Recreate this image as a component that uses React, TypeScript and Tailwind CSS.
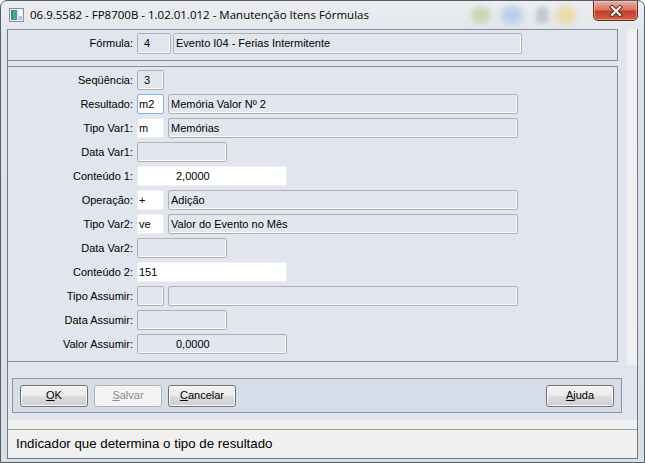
import React from "react";

type BoxProps = {
  w: string;
  kind: "gray" | "white" | "focus";
  text?: string;
  pad?: string;
};

function Box({ w, kind, text, pad }: BoxProps) {
  const base =
    kind === "gray"
      ? "border-[#b0b0b0] bg-[#e2e6ee] shadow-[inset_-1px_-1px_0_#fbfbfb]"
      : kind === "focus"
      ? "border-[#7eb4ea] bg-white"
      : "border-[#edf0f4] bg-white";
  return (
    <div
      className={`flex h-[20px] items-center overflow-hidden whitespace-nowrap rounded-[2px] border ${base} ${w} ${pad ?? "pl-[2px]"}`}
    >
      {text}
    </div>
  );
}

function Row({ label, children }: { label: string; children: React.ReactNode }) {
  return (
    <div className="flex h-[20px] items-center">
      <div className="w-[125px] text-right">{label}</div>
      <div className="ml-[4px] flex gap-[4px]">{children}</div>
    </div>
  );
}

function Btn({ children, disabled }: { children: React.ReactNode; disabled?: boolean }) {
  return (
    <div
      className={
        disabled
          ? "flex h-[22px] w-[68px] items-center justify-center rounded-[3px] border border-[#adb2b5] bg-[#f4f4f4] text-[#8a8a8a]"
          : "flex h-[22px] w-[68px] items-center justify-center rounded-[3px] border border-[#707070] bg-[linear-gradient(#f2f2f2,#ebebeb_50%,#dddddd_50%,#cfcfcf)] shadow-[inset_0_0_0_1px_#fcfcfc] text-black"
      }
    >
      {children}
    </div>
  );
}

export default function App() {
  return (
    <div className="flex h-[463px] w-[645px] flex-col overflow-hidden rounded-t-[7px] border border-[#555e68] bg-[linear-gradient(180deg,#eceef1,#e0e4e9_40px,#dadfe5)] font-['Liberation_Sans',Arial,sans-serif] text-[11px] text-black">
      {/* Title bar */}
      <div className="relative flex h-[28px] shrink-0 items-start">
        <div className="pointer-events-none absolute left-[470px] top-[6px] h-[16px] w-[20px] rounded-full bg-[#a8c47a] opacity-50 blur-[3px]" />
        <div className="pointer-events-none absolute left-[500px] top-[5px] h-[18px] w-[22px] rounded-full bg-[#8db6e2] opacity-50 blur-[3px]" />
        <div className="pointer-events-none absolute left-[535px] top-[6px] h-[16px] w-[12px] rounded-sm bg-[#8d949c] opacity-40 blur-[2px]" />
        <div className="pointer-events-none absolute left-[555px] top-[5px] h-[18px] w-[20px] rounded-full bg-[#f0cf7c] opacity-60 blur-[3px]" />
        <div className="ml-[8px] mt-[7px]">
          <svg width="15" height="14" viewBox="0 0 15 14">
            <rect x="0.5" y="0.5" width="14" height="13" fill="#f4f4f4" stroke="#8a8f96" />
            <rect x="2" y="2" width="2" height="10" fill="#2e8f8a" />
            <rect x="4" y="2" width="2" height="10" fill="#49b07a" />
            <rect x="6" y="2" width="2" height="10" fill="#4f8fcf" />
            <rect x="8" y="2" width="2" height="10" fill="#d8e4ee" />
            <rect x="10" y="2" width="3" height="10" fill="#ffffff" />
            <rect x="10" y="8" width="3" height="4" fill="#b9c0c8" />
          </svg>
        </div>
        <div className="relative ml-[6px] mt-[6px] font-['Open_Sans','Noto_Sans',sans-serif] text-[11.5px] leading-[16px] text-black">
          06.9.5582 - FP8700B - 1.02.01.012 - Manutenção Itens Fórmulas
        </div>
        <div className="relative ml-auto mr-[6px] -mt-[1px] flex h-[21px] w-[45px] items-center justify-center rounded-b-[5px] border border-[#6b2a21] bg-[linear-gradient(180deg,#eab1a5,#d9755f_45%,#c13f27_55%,#d2614a)] shadow-[inset_0_0_0_1px_rgba(255,220,210,0.45)]">
          <svg width="14" height="12" viewBox="0 0 14 12">
            <path d="M3 2 L11 10 M11 2 L3 10" stroke="#5a2018" strokeWidth="4" strokeLinecap="square" />
            <path d="M3 2 L11 10 M11 2 L3 10" stroke="#ffffff" strokeWidth="2.2" strokeLinecap="square" />
          </svg>
        </div>
      </div>

      {/* Client */}
      <div className="ml-[6px] mr-[6px] flex h-[430px] shrink-0 flex-col border-x border-b border-[#6f7a86] bg-[#e1e5ed]">
        {/* top region */}
        <div className="flex h-[336px] shrink-0">
          <div className="flex w-[619px] flex-col bg-[#e1e5ed]">
            {/* panel 1 */}
            <div className="h-[32px] w-[610px] border-y border-r border-[#838fa0] pt-[3px]">
              <div className="flex h-[21px] items-center">
                <div className="w-[125px] text-right">Fórmula:</div>
                <div className="ml-[4px] flex gap-[2px]">
                  <div className="flex h-[21px] w-[34px] items-center rounded-[2px] border border-[#b0b0b0] pl-[6px] shadow-[inset_-1px_-1px_0_#fbfbfb]">
                    4
                  </div>
                  <div className="flex h-[21px] w-[349px] items-center rounded-[2px] border border-[#b0b0b0] pl-[2px] shadow-[inset_-1px_-1px_0_#fbfbfb]">
                    Evento I04 - Ferias Intermitente
                  </div>
                </div>
              </div>
            </div>
            {/* panel 2 */}
            <div className="mt-[5px] flex h-[296px] w-[610px] flex-col gap-[4px] border-y border-r border-[#838fa0] pt-[3px]">
              <Row label="Seqüência:">
                <Box w="w-[27px]" kind="gray" text="3" pad="pl-[6px]" />
              </Row>
              <Row label="Resultado:">
                <Box w="w-[27px]" kind="focus" text="m2" pad="pl-[1px]" />
                <Box w="w-[350px]" kind="gray" text="Memória Valor Nº 2" />
              </Row>
              <Row label="Tipo Var1:">
                <Box w="w-[27px]" kind="white" text="m" pad="pl-[1px]" />
                <Box w="w-[350px]" kind="gray" text="Memórias" />
              </Row>
              <Row label="Data Var1:">
                <Box w="w-[90px]" kind="gray" />
              </Row>
              <Row label="Conteúdo 1:">
                <Box w="w-[150px]" kind="white" text="2,0000" pad="pl-[38px]" />
              </Row>
              <Row label="Operação:">
                <Box w="w-[27px]" kind="white" text="+" pad="pl-[1px]" />
                <Box w="w-[350px]" kind="gray" text="Adição" />
              </Row>
              <Row label="Tipo Var2:">
                <Box w="w-[27px]" kind="white" text="ve" pad="pl-[1px]" />
                <Box w="w-[350px]" kind="gray" text="Valor do Evento no Mês" />
              </Row>
              <Row label="Data Var2:">
                <Box w="w-[90px]" kind="gray" />
              </Row>
              <Row label="Conteúdo 2:">
                <Box w="w-[150px]" kind="white" text="151" pad="pl-[1px]" />
              </Row>
              <Row label="Tipo Assumir:">
                <Box w="w-[27px]" kind="gray" />
                <Box w="w-[350px]" kind="gray" />
              </Row>
              <Row label="Data Assumir:">
                <Box w="w-[90px]" kind="gray" />
              </Row>
              <Row label="Valor Assumir:">
                <Box w="w-[150px]" kind="gray" text="0,0000" pad="pl-[38px]" />
              </Row>
            </div>
          </div>
          <div className="w-[10px] bg-[#f0f0f0]" />
        </div>

        {/* buttons region */}
        <div className="h-[55px] shrink-0 bg-[#e1e5ed] pt-[13px]">
          <div className="ml-[4px] flex h-[35px] w-[610px] items-center border border-[#8a96a6] bg-[#d5ddeb] px-[7px]">
            <div className="flex gap-[6px]">
              <Btn>
                <span className="underline">O</span>K
              </Btn>
              <Btn disabled>
                <span className="underline">S</span>alvar
              </Btn>
              <Btn>
                <span className="underline">C</span>ancelar
              </Btn>
            </div>
            <div className="ml-auto">
              <Btn>
                <span className="underline">A</span>juda
              </Btn>
            </div>
          </div>
        </div>

        <div className="h-[9px] shrink-0 bg-[#f0f0f0]" />
        <div className="flex h-[29px] shrink-0 items-center border-t border-[#a0a0a0] bg-[#f0f0f0] pl-[8px] text-[13.3px]">
          Indicador que determina o tipo de resultado
        </div>
      </div>
    </div>
  );
}
